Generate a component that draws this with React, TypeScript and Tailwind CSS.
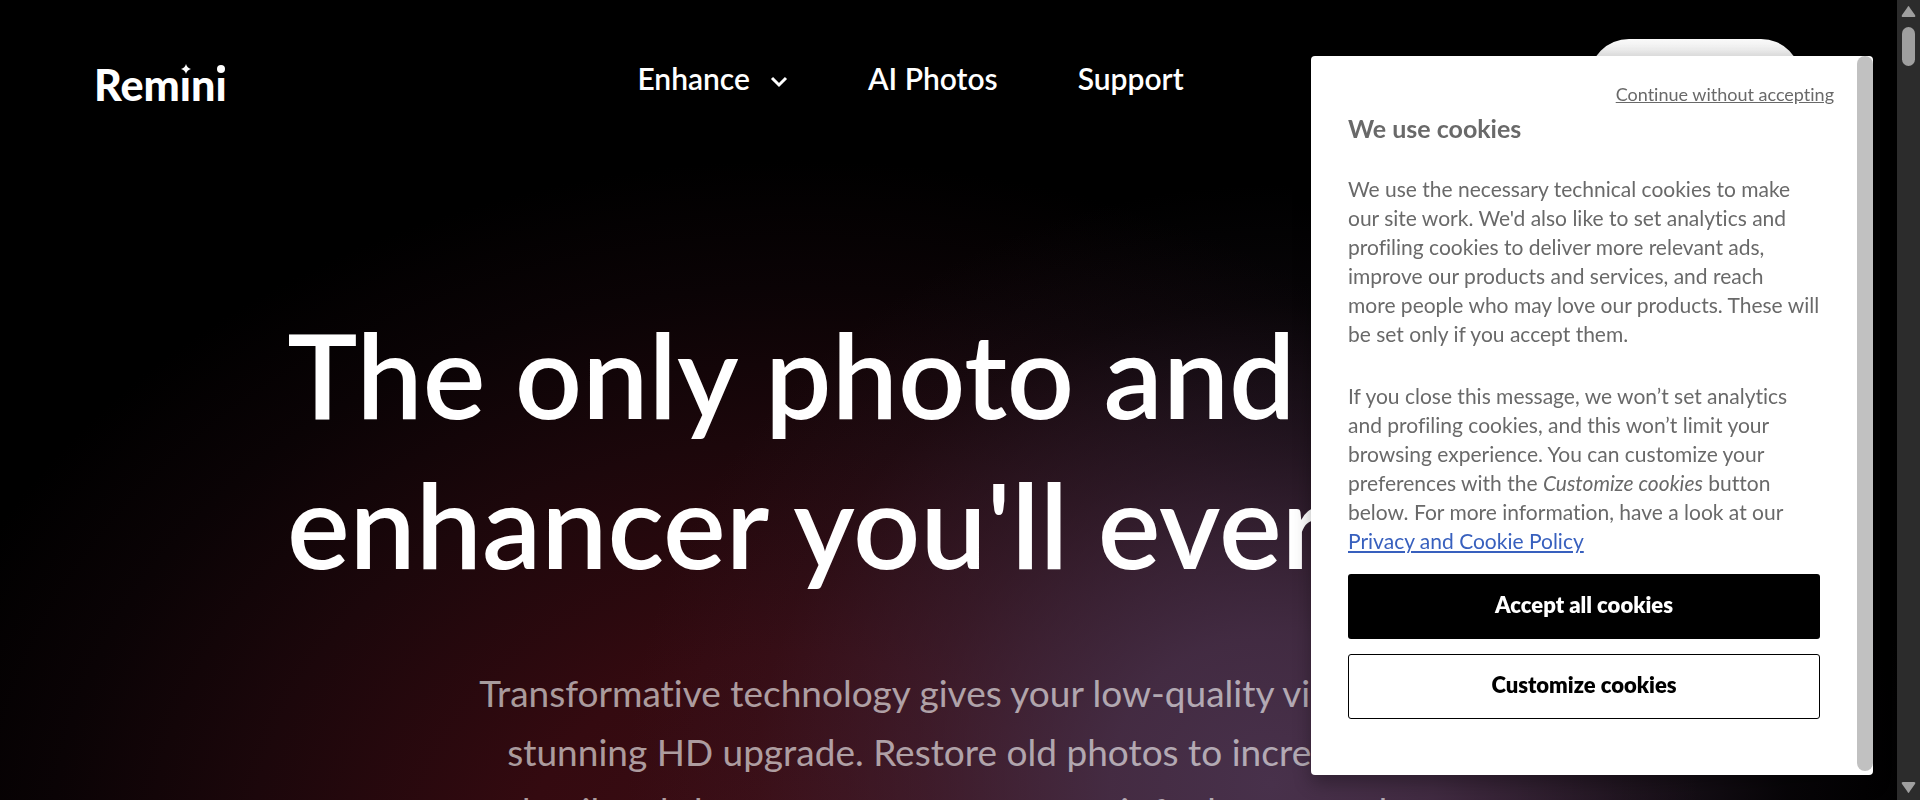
const navLink = "text-3xl font-semibold text-white"

const Logo = () => {
    return (
        <a href="#" aria-label="Remini" className="block">
            <svg width="136" height="40" viewBox="0 0 136 40" fill="#fff">
                <text
                    x="-2"
                    y="37"
                    fontFamily="Lato, sans-serif"
                    fontSize="43"
                    fontWeight="900"
                >
                    Rem&#305;n&#305;
                </text>
                <path d="M90 0 Q91 4 95 5 Q91 6 90 10 Q89 6 85 5 Q89 4 90 0Z" />
                <circle cx="125" cy="5" r="4" />
            </svg>
        </a>
    )
}

const Header = () => {
    return (
        <header className="flex items-start justify-between px-24 pt-[39px]">
            <div className="pt-[25px]">
                <Logo />
            </div>
            <nav className="flex justify-center gap-20 pt-[21px] whitespace-nowrap">
                <button type="button" className={`flex items-center gap-5 ${navLink}`}>
                    Enhance
                    <svg className="mt-2" width="18" height="12" viewBox="0 0 18 12" fill="none">
                        <path d="M2 2l7 7 7-7" stroke="#fff" strokeWidth="3" />
                    </svg>
                </button>
                <a href="#" className={navLink}>
                    AI Photos
                </a>
                <a href="#" className={navLink}>
                    Support
                </a>
            </nav>
            <button
                type="button"
                aria-label="Try it now"
                className="h-20 w-[212px] rounded-[40px] bg-linear-to-b from-[#fafafa] to-[#a0a0a0]"
            ></button>
        </header>
    )
}

const Hero = () => {
    return (
        <section className="mt-[180px] flex flex-col items-center text-center whitespace-nowrap">
            <h1 className="text-[118px] leading-[150px] font-semibold text-white">
                The only photo and video
                <br />
                enhancer you'll ever need
            </h1>
            <p className="mt-16 text-[37px] leading-[59px] text-white/60">
                Transformative technology gives your low-quality visuals a
                <br />
                stunning HD upgrade. Restore old photos to incredible
                <br />
                detail and sharpness, so you can save it for beauty and
            </p>
        </section>
    )
}

const CookieDialog = () => {
    return (
        <div
            role="dialog"
            aria-labelledby="cookieTitle"
            className="fixed top-14 right-[47px] flex w-[562px] rounded-sm bg-white text-[#696969] shadow-[0_8px_18px_rgba(0,0,0,0.3)]"
        >
            <div className="flex-1 pt-6 pr-[37px] pb-14 pl-[37px]">
                <div className="flex justify-end">
                    <button type="button" className="-mr-3.5 text-lg underline">
                        Continue without accepting
                    </button>
                </div>
                <h2 id="cookieTitle" className="mt-1 text-[25px] leading-8 font-bold">
                    We use cookies
                </h2>
                <p className="mt-[30px] text-[21px] leading-[29px] whitespace-nowrap">
                    We use the necessary technical cookies to make
                    <br />
                    our site work. We'd also like to set analytics and
                    <br />
                    profiling cookies to deliver more relevant ads,
                    <br />
                    improve our products and services, and reach
                    <br />
                    more people who may love our products. These will
                    <br />
                    be set only if you accept them.
                </p>
                <p className="mt-[33px] text-[21px] leading-[29px] whitespace-nowrap">
                    If you close this message, we won’t set analytics
                    <br />
                    and profiling cookies, and this won’t limit your
                    <br />
                    browsing experience. You can customize your
                    <br />
                    preferences with the <em>Customize cookies</em> button
                    <br />
                    below. For more information, have a look at our
                    <br />
                    <a href="#" className="text-[#3860be] underline">
                        Privacy and Cookie Policy
                    </a>
                </p>
                <div className="mt-[19px] flex flex-col gap-[15px] text-[22px] font-extrabold">
                    <button
                        type="button"
                        className="h-[65px] rounded-[3px] bg-black pb-1 text-white"
                    >
                        Accept all cookies
                    </button>
                    <button
                        type="button"
                        className="h-[65px] rounded-[3px] border border-black pb-1 text-black"
                    >
                        Customize cookies
                    </button>
                </div>
            </div>
            <div className="w-4 pb-1">
                <div className="h-full rounded-full bg-[#c1c1c1]"></div>
            </div>
        </div>
    )
}

const ScrollBar = () => {
    return (
        <div className="flex w-[23px] flex-col items-center bg-[#2c2c2c] py-1.5">
            <svg width="15" height="13" viewBox="0 0 15 13" fill="#9f9f9f">
                <path d="M7.5 0 Q8 0 9 2 L14 9 Q15 11 13 11 H2 Q0 11 1 9 L6 2 Q7 0 7.5 0Z" />
            </svg>
            <div className="mt-2 h-[39px] w-[13px] rounded-full bg-[#9f9f9f]"></div>
            <svg className="mt-auto" width="15" height="13" viewBox="0 0 15 13" fill="#9f9f9f">
                <path d="M7.5 12 Q8 12 9 10 L14 3 Q15 1 13 1 H2 Q0 1 1 3 L6 10 Q7 12 7.5 12Z" />
            </svg>
        </div>
    )
}

const App = () => {
    return (
        <div className="flex h-screen overflow-hidden bg-black font-['Lato',sans-serif] [font-variant-ligatures:none]">
            <main className="min-w-0 flex-1 overflow-hidden bg-[radial-gradient(ellipse_34%_75%_at_67%_98%,#48314b_0%,#48314bd9_25%,#48314b66_55%,#48314b1a_80%,transparent_100%),radial-gradient(ellipse_48%_88%_at_42%_108%,#3c0d14_0%,#340a10_30%,#1c070b_60%,#0a0305_82%,transparent_100%)]">
                <Header />
                <Hero />
            </main>
            <ScrollBar />
            <CookieDialog />
        </div>
    )
}

export default App
